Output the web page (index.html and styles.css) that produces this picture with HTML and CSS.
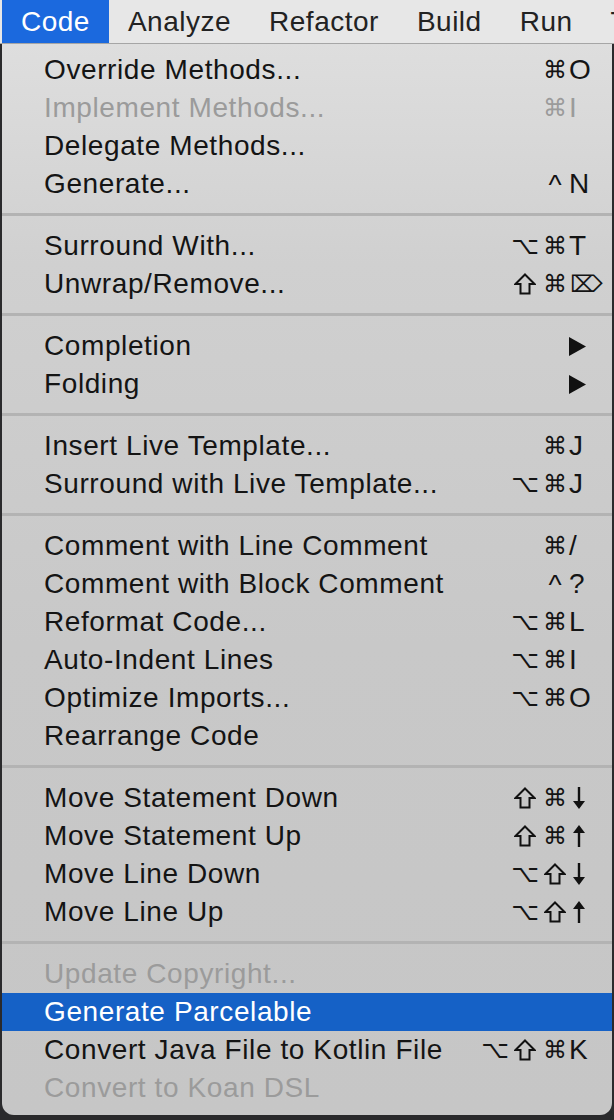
FILE: index.html
```html
<!DOCTYPE html>
<html lang="en">
<head>
<meta charset="utf-8">
<title>Code menu</title>
<link rel="stylesheet" href="styles.css">
</head>
<body>
<div class="menubar">
  <span class="mb-item active">Code</span>
  <span class="mb-item">Analyze</span>
  <span class="mb-item">Refactor</span>
  <span class="mb-item">Build</span>
  <span class="mb-item">Run</span>
  <span class="mb-item">Tools</span>
</div>
<div class="menu">
  <div class="row"><span class="label">Override Methods...</span><span class="mods"><span class="m">⌘</span></span><span class="key">O</span></div>
  <div class="row disabled"><span class="label">Implement Methods...</span><span class="mods"><span class="m">⌘</span></span><span class="key">I</span></div>
  <div class="row"><span class="label">Delegate Methods...</span><span class="mods"></span><span class="key"></span></div>
  <div class="row"><span class="label">Generate...</span><span class="mods"><span class="m caret">^</span></span><span class="key">N</span></div>
  <div class="sep"></div>
  <div class="row"><span class="label">Surround With...</span><span class="mods"><span class="m">⌥</span><span class="m">⌘</span></span><span class="key">T</span></div>
  <div class="row"><span class="label">Unwrap/Remove...</span><span class="mods"><span class="m"><svg class="shift" width="22" height="22" viewBox="0 0 22 22"><polygon points="11,1.5 20.5,11 15.5,11 15.5,20.5 6.5,20.5 6.5,11 1.5,11" fill="none" stroke="#111" stroke-width="2"/></svg></span><span class="m">⌘</span></span><span class="key del">⌦</span></div>
  <div class="sep"></div>
  <div class="row"><span class="label">Completion</span><span class="mods"></span><span class="key"><svg class="arrow" width="17" height="19" viewBox="0 0 17 19"><polygon points="0,0 17,9.5 0,19" fill="#111"/></svg></span></div>
  <div class="row"><span class="label">Folding</span><span class="mods"></span><span class="key"><svg class="arrow" width="17" height="19" viewBox="0 0 17 19"><polygon points="0,0 17,9.5 0,19" fill="#111"/></svg></span></div>
  <div class="sep"></div>
  <div class="row"><span class="label">Insert Live Template...</span><span class="mods"><span class="m">⌘</span></span><span class="key">J</span></div>
  <div class="row"><span class="label">Surround with Live Template...</span><span class="mods"><span class="m">⌥</span><span class="m">⌘</span></span><span class="key">J</span></div>
  <div class="sep"></div>
  <div class="row"><span class="label">Comment with Line Comment</span><span class="mods"><span class="m">⌘</span></span><span class="key">/</span></div>
  <div class="row"><span class="label">Comment with Block Comment</span><span class="mods"><span class="m caret">^</span></span><span class="key">?</span></div>
  <div class="row"><span class="label">Reformat Code...</span><span class="mods"><span class="m">⌥</span><span class="m">⌘</span></span><span class="key">L</span></div>
  <div class="row"><span class="label">Auto-Indent Lines</span><span class="mods"><span class="m">⌥</span><span class="m">⌘</span></span><span class="key">I</span></div>
  <div class="row"><span class="label">Optimize Imports...</span><span class="mods"><span class="m">⌥</span><span class="m">⌘</span></span><span class="key">O</span></div>
  <div class="row"><span class="label">Rearrange Code</span><span class="mods"></span><span class="key"></span></div>
  <div class="sep"></div>
  <div class="row"><span class="label">Move Statement Down</span><span class="mods"><span class="m"><svg class="shift" width="22" height="22" viewBox="0 0 22 22"><polygon points="11,1.5 20.5,11 15.5,11 15.5,20.5 6.5,20.5 6.5,11 1.5,11" fill="none" stroke="#111" stroke-width="2"/></svg></span><span class="m">⌘</span></span><span class="key"><svg class="varrow" width="14" height="22" viewBox="0 0 14 22"><path d="M7 0 V20" stroke="#111" stroke-width="2.4"/><polygon points="1,14 13,14 7,22" fill="#111"/></svg></span></div>
  <div class="row"><span class="label">Move Statement Up</span><span class="mods"><span class="m"><svg class="shift" width="22" height="22" viewBox="0 0 22 22"><polygon points="11,1.5 20.5,11 15.5,11 15.5,20.5 6.5,20.5 6.5,11 1.5,11" fill="none" stroke="#111" stroke-width="2"/></svg></span><span class="m">⌘</span></span><span class="key"><svg class="varrow" width="14" height="22" viewBox="0 0 14 22"><path d="M7 2 V22" stroke="#111" stroke-width="2.4"/><polygon points="1,8 13,8 7,0" fill="#111"/></svg></span></div>
  <div class="row"><span class="label">Move Line Down</span><span class="mods"><span class="m">⌥</span><span class="m"><svg class="shift" width="22" height="22" viewBox="0 0 22 22"><polygon points="11,1.5 20.5,11 15.5,11 15.5,20.5 6.5,20.5 6.5,11 1.5,11" fill="none" stroke="#111" stroke-width="2"/></svg></span></span><span class="key"><svg class="varrow" width="14" height="22" viewBox="0 0 14 22"><path d="M7 0 V20" stroke="#111" stroke-width="2.4"/><polygon points="1,14 13,14 7,22" fill="#111"/></svg></span></div>
  <div class="row"><span class="label">Move Line Up</span><span class="mods"><span class="m">⌥</span><span class="m"><svg class="shift" width="22" height="22" viewBox="0 0 22 22"><polygon points="11,1.5 20.5,11 15.5,11 15.5,20.5 6.5,20.5 6.5,11 1.5,11" fill="none" stroke="#111" stroke-width="2"/></svg></span></span><span class="key"><svg class="varrow" width="14" height="22" viewBox="0 0 14 22"><path d="M7 2 V22" stroke="#111" stroke-width="2.4"/><polygon points="1,8 13,8 7,0" fill="#111"/></svg></span></div>
  <div class="sep"></div>
  <div class="row disabled"><span class="label">Update Copyright...</span><span class="mods"></span><span class="key"></span></div>
  <div class="row selected"><span class="label">Generate Parcelable</span><span class="mods"></span><span class="key"></span></div>
  <div class="row"><span class="label">Convert Java File to Kotlin File</span><span class="mods"><span class="m">⌥</span><span class="m"><svg class="shift" width="22" height="22" viewBox="0 0 22 22"><polygon points="11,1.5 20.5,11 15.5,11 15.5,20.5 6.5,20.5 6.5,11 1.5,11" fill="none" stroke="#111" stroke-width="2"/></svg></span><span class="m">⌘</span></span><span class="key">K</span></div>
  <div class="row disabled"><span class="label">Convert to Koan DSL</span><span class="mods"></span><span class="key"></span></div>
</div>
</body>
</html>
```
FILE: styles.css
```css
html, body {
  margin: 0;
  padding: 0;
}
body {
  width: 614px;
  height: 1120px;
  overflow: hidden;
  background: #2a2a2c;
  font-family: "Liberation Sans", Arial, sans-serif;
  color: #151515;
}
.menubar {
  height: 43px;
  border-bottom: 1px solid #a6a6a6;
  background: #e7e7e7;
  display: flex;
  align-items: stretch;
  padding-left: 2px;
  white-space: nowrap;
  overflow: hidden;
}
.mb-item {
  display: flex;
  align-items: center;
  padding: 1px 19px 0;
  font-size: 28px;
  letter-spacing: 0.5px;
  color: #222;
  flex: none;
}
.mb-item.active {
  background: #1b69de;
  color: #fff;
}
.menu {
  margin: 0 2px;
  height: 1071px;
  box-sizing: border-box;
  padding: 7px 0 8px;
  background: linear-gradient(#dedede 0px, #d0d0d0 220px, #c8c8c8 600px, #c6c6c6 100%);
  border-radius: 0 0 12px 12px;
  overflow: hidden;
}
.row {
  height: 38px;
  display: grid;
  grid-template-columns: 1fr auto 36px;
  align-items: center;
  padding: 0 8px 0 42px;
  font-size: 28px;
  letter-spacing: 0.6px;
  white-space: nowrap;
  color: #141414;
}
.row.disabled {
  color: #9b9b9b;
}
.row.selected {
  background: #1561c6;
  color: #fff;
}
.mods {
  display: flex;
  justify-content: flex-end;
  align-items: center;
  gap: 6px;
  padding-right: 1px;
}
.m {
  width: 24px;
  height: 30px;
  display: flex;
  align-items: center;
  justify-content: center;
  font-family: "DejaVu Sans", sans-serif;
  font-size: 24px;
  letter-spacing: 0;
}
.m.caret {
  font-family: "Liberation Sans", Arial, sans-serif;
  font-size: 28px;
  padding-top: 2px;
}
.shift {
  display: block;
}
.key {
  padding-left: 1px;
  display: flex;
  align-items: center;
  font-family: "Liberation Sans", Arial, sans-serif;
}
.key.del {
  font-family: "DejaVu Sans", sans-serif;
  font-size: 23px;
  padding-left: 2px;
}
.arrow,
.varrow {
  display: block;
}
.varrow {
  margin-left: 3px;
}
.sep {
  height: 3px;
  margin: 10px 0 11px;
  background: #b3b3b3;
}
```
